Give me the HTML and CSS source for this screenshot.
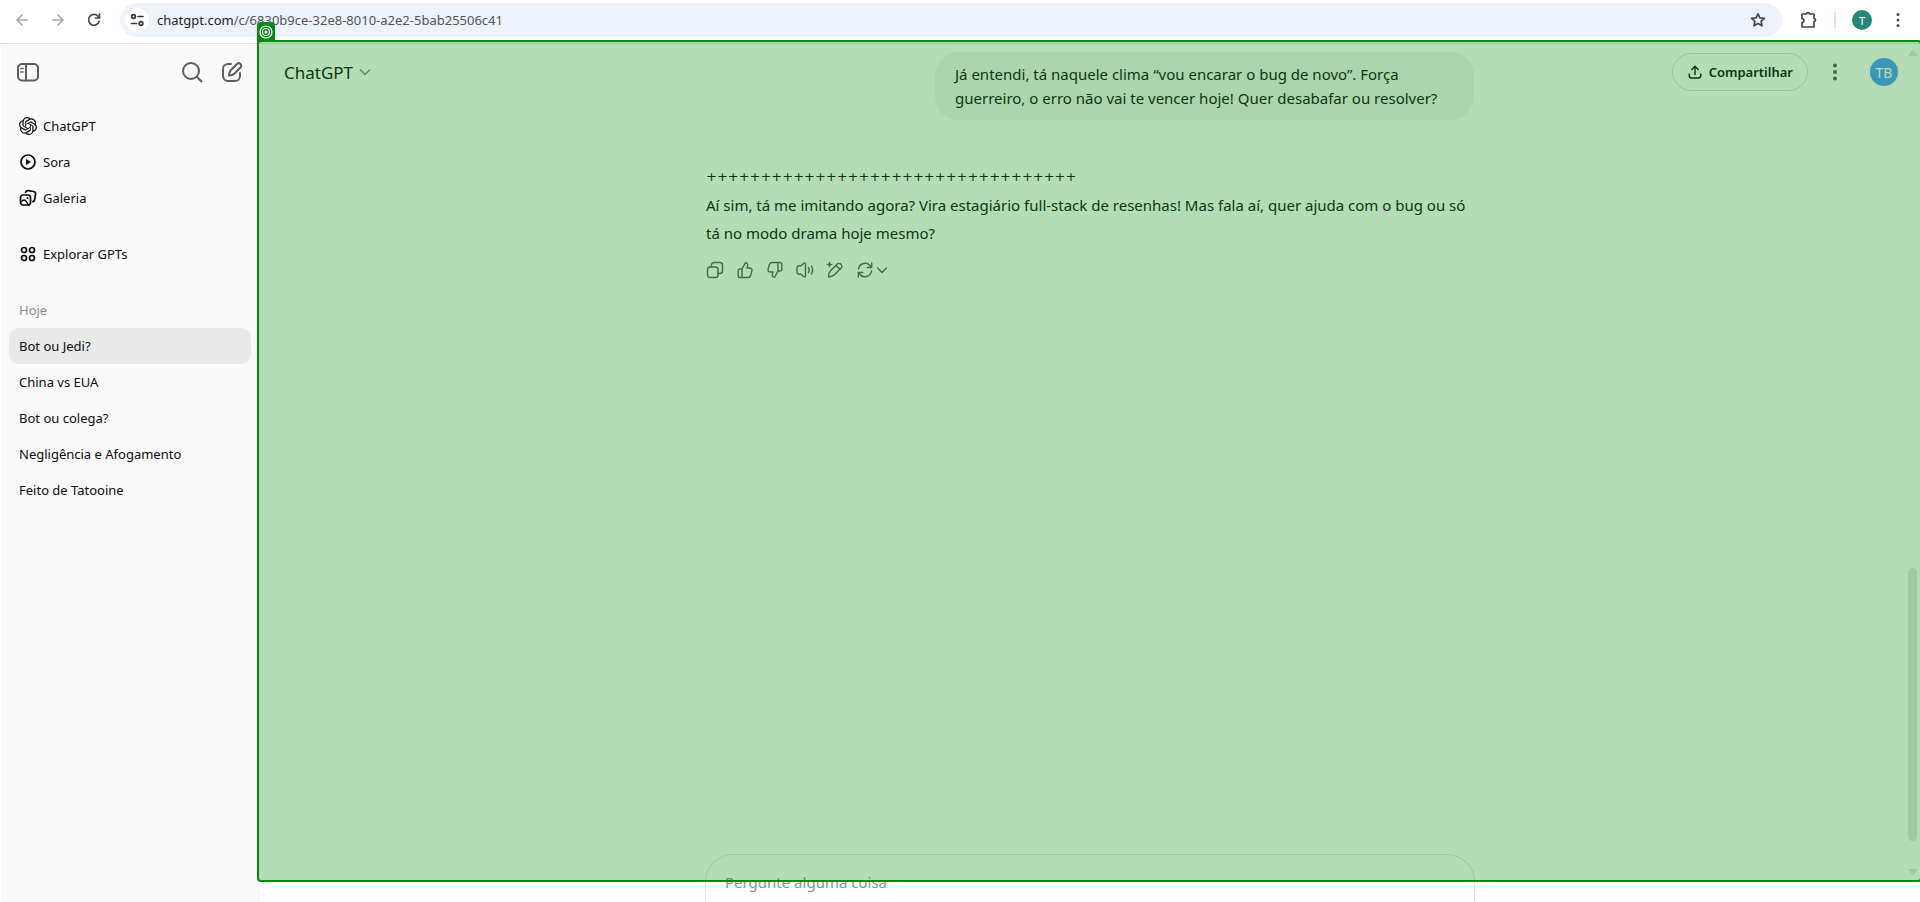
FILE: index.html
```html
<!DOCTYPE html>
<html lang="pt-BR">
<head>
<meta charset="utf-8">
<title>Bot ou Jedi?</title>
<link rel="stylesheet" href="styles.css">
</head>
<body>
<header class="browser">
  <nav class="browser-nav">
    <button class="tool muted" aria-label="Voltar"><svg class="i16" viewBox="0 0 16 16"><path class="bold" d="M13.500 8H3M8 3 3 8l5 5"/></svg></button>
    <button class="tool muted" aria-label="Avançar"><svg class="i16" viewBox="0 0 16 16"><path class="bold" d="M2.500 8H13M8 3l5 5-5 5"/></svg></button>
    <button class="tool" aria-label="Recarregar"><svg class="i16" viewBox="0 0 16 16"><path class="bold" d="M13.2 9.3A5.4 5.4 0 1 1 12 4.2l1.3 1.5M13.5 2v4h-4"/></svg></button>
  </nav>
  <div class="address">
    <button class="site-info" aria-label="Informações do site"><svg class="i16" viewBox="0 0 16 16"><circle class="bold" cx="4.500" cy="4.500" r="1.800"/><path class="bold" d="M9 4.500h5M2.500 11.500h5"/><circle class="bold" cx="12" cy="11.500" r="1.800"/></svg></button>
    <span class="url"><b>chatgpt.com</b>/c/6830b9ce-32e8-8010-a2e2-5bab25506c41</span>
    <button class="tool star" aria-label="Favoritar"><svg class="i16" viewBox="0 0 16 16"><path class="bold" d="m8 1.800 1.900 4.100 4.500.5-3.300 3 .9 4.400L8 11.600l-4 2.200.9-4.400-3.300-3 4.500-.5z"/></svg></button>
  </div>
  <button class="tool" aria-label="Extensões"><svg class="i18" viewBox="0 0 18 18"><path class="bold" d="M2 3h4.500a1.500 1.500 0 0 1 3 0H14v4.500a1.500 1.500 0 0 1 0 3V16H2v-4.500c2.500 0 2.500-4 0-4z"/></svg></button>
  <span class="divider"></span>
  <button class="profile" aria-label="Perfil">T</button>
  <button class="tool menu" aria-label="Menu do navegador"><svg class="i16 solid" viewBox="0 0 16 16"><circle cx="8" cy="2.500" r="1.500"/><circle cx="8" cy="8" r="1.500"/><circle cx="8" cy="13.500" r="1.500"/></svg></button>
</header>

<div class="app">
  <aside class="sidebar">
    <div class="side-top">
      <button class="tool" aria-label="Fechar barra lateral"><svg class="i24" viewBox="0 0 24 24"><rect class="heavy" x="2" y="4" width="20" height="16.500" rx="4"/><path class="heavy" d="M10 4v16.500"/><path class="bold" d="M5 8.500h2M5 12h2"/></svg></button>
      <span class="side-tools">
        <button class="tool" aria-label="Buscar"><svg class="i24" viewBox="0 0 24 24"><circle class="heavy" cx="11" cy="11" r="8"/><path class="heavy" d="m17 17 4.500 4.500"/></svg></button>
        <button class="tool" aria-label="Novo chat"><svg class="i24" viewBox="0 0 24 24"><path class="heavy" d="M11 4H8a5 5 0 0 0-5 5v7a5 5 0 0 0 5 5h7a5 5 0 0 0 5-5v-3"/><path class="heavy" d="M9 15.500c0-3 .5-4 2-5.500l6-6a2.400 2.400 0 0 1 3.500 3.500l-6 6c-1.500 1.500-2.500 2-5.500 2z"/></svg></button>
      </span>
    </div>
    <nav class="links">
      <a href="#"><svg class="i18 solid" viewBox="0 0 24 24"><path d="M22.2819 9.8211a5.9847 5.9847 0 0 0-.5157-4.9108 6.0462 6.0462 0 0 0-6.5098-2.9A6.0651 6.0651 0 0 0 4.9807 4.1818a5.9847 5.9847 0 0 0-3.9977 2.9 6.0462 6.0462 0 0 0 .7427 7.0966 5.98 5.98 0 0 0 .511 4.9107 6.051 6.051 0 0 0 6.5146 2.9001A5.9847 5.9847 0 0 0 13.2599 24a6.0557 6.0557 0 0 0 5.7718-4.2058 5.9894 5.9894 0 0 0 3.9977-2.9001 6.0557 6.0557 0 0 0-.7475-7.0729zm-9.022 12.6081a4.4755 4.4755 0 0 1-2.8764-1.0408l.1419-.0804 4.7783-2.7582a.7948.7948 0 0 0 .3927-.6813v-6.7369l2.02 1.1686a.071.071 0 0 1 .038.052v5.5826a4.504 4.504 0 0 1-4.4945 4.4944zm-9.6607-4.1254a4.4708 4.4708 0 0 1-.5346-3.0137l.142.0852 4.783 2.7582a.7712.7712 0 0 0 .7806 0l5.8428-3.3685v2.3324a.0804.0804 0 0 1-.0332.0615L9.74 19.9502a4.4992 4.4992 0 0 1-6.1408-1.6464zM2.3408 7.8956a4.485 4.485 0 0 1 2.3655-1.9728V11.6a.7664.7664 0 0 0 .3879.6765l5.8144 3.3543-2.0201 1.1685a.0757.0757 0 0 1-.071 0l-4.8303-2.7865A4.504 4.504 0 0 1 2.3408 7.872zm16.5963 3.8558L13.1038 8.364 15.1192 7.2a.0757.0757 0 0 1 .071 0l4.8303 2.7913a4.4944 4.4944 0 0 1-.6765 8.1042v-5.6772a.79.79 0 0 0-.407-.667zm2.0107-3.0231l-.142-.0852-4.7735-2.7818a.7759.7759 0 0 0-.7854 0L9.409 9.2297V6.8974a.0662.0662 0 0 1 .0284-.0615l4.8303-2.7866a4.4992 4.4992 0 0 1 6.6802 4.66zM8.3065 12.863l-2.02-1.1638a.0804.0804 0 0 1-.038-.0567V6.0742a4.4992 4.4992 0 0 1 7.3757-3.4537l-.142.0805L8.704 5.459a.7948.7948 0 0 0-.3927.6813zm1.0976-2.3654l2.602-1.4998 2.6069 1.4998v2.9994l-2.5974 1.4997-2.6067-1.4997Z"/></svg>ChatGPT</a>
      <a href="#"><svg class="i18" viewBox="0 0 18 18"><circle class="bold" cx="9" cy="9" r="7"/><path class="fill" d="m7 6 5 3-5 3z"/></svg>Sora</a>
      <a href="#"><svg class="i18" viewBox="0 0 18 18"><rect class="bold" x="1.500" y="6" width="10" height="10" rx="2.500"/><path class="bold" d="M6.500 3.500C7 1.700 8 1.500 9.500 1.700l5 .8c1.800.3 2.300 1.300 2 3l-.8 5c-.2 1.300-.8 2-2 2.200"/><path d="M2 13c3-3.500 5-2 7 2.500"/><circle class="fill" cx="8.500" cy="9" r="1"/></svg>Galeria</a>
      <a class="explore" href="#"><svg class="i18" viewBox="0 0 18 18"><circle class="bold" cx="5" cy="5" r="2.500"/><circle class="bold" cx="13" cy="5" r="2.500"/><circle class="bold" cx="5" cy="13" r="2.500"/><circle class="bold" cx="13" cy="13" r="2.500"/></svg>Explorar GPTs</a>
    </nav>
    <h2 class="group">Hoje</h2>
    <nav class="links">
      <a class="active" href="#">Bot ou Jedi?</a>
      <a href="#">China vs EUA</a>
      <a href="#">Bot ou colega?</a>
      <a href="#">Negligência e Afogamento</a>
      <a href="#">Feito de Tatooine</a>
    </nav>
  </aside>

  <main class="chat">
    <div class="topbar">
      <button class="model">ChatGPT<svg class="i16" viewBox="0 0 16 16"><path class="bold" d="m3.500 6 4.500 4.500L12.500 6"/></svg></button>
      <div class="top-actions">
        <button class="share"><svg class="i16" viewBox="0 0 16 16"><path d="M8 10.500V2.500M4.800 5.500 8 2.300l3.200 3.200M2.200 10v1.500c0 1.700.8 2.500 2.500 2.500h6.600c1.700 0 2.500-.8 2.500-2.500V10"/></svg>Compartilhar</button>
        <button class="tool" aria-label="Mais opções"><svg class="i18 solid" viewBox="0 0 18 18"><circle cx="9" cy="2.500" r="2"/><circle cx="9" cy="9" r="2"/><circle cx="9" cy="15.500" r="2"/></svg></button>
        <button class="avatar" aria-label="Conta">TB</button>
      </div>
    </div>
    <div class="thread">
      <p class="bubble">Já entendi, tá naquele clima “vou encarar o bug de novo”. Força guerreiro, o erro não vai te vencer hoje! Quer desabafar ou resolver?</p>
      <div class="answer">
        <p class="pluses">++++++++++++++++++++++++++++++++++</p>
        <p>Aí sim, tá me imitando agora? Vira estagiário full-stack de resenhas! Mas fala aí, quer ajuda com o bug ou só tá no modo drama hoje mesmo?</p>
      </div>
      <div class="actions">
        <button class="tool" aria-label="Copiar"><svg class="i18" viewBox="0 0 18 18"><rect x="1.500" y="6" width="10.500" height="10.500" rx="2.500"/><path d="M5.500 6V4A2.500 2.500 0 0 1 8 1.500h6A2.500 2.500 0 0 1 16.500 4v6a2.500 2.500 0 0 1-2.500 2.500h-2"/></svg></button>
        <button class="tool" aria-label="Boa resposta"><svg class="i18" viewBox="0 0 18 18"><path d="M6 8 9.300 1.800c2 0 2.700 1.200 2.300 2.800L11 7h2.800c1.700 0 2.500 1.200 2.100 2.800l-1.200 4.500c-.4 1.500-1.200 2.200-2.700 2.200H4A1.800 1.800 0 0 1 2.200 14.700v-5A1.700 1.700 0 0 1 4 8h2v8.500"/></svg></button>
        <button class="tool" aria-label="Resposta ruim"><svg class="i18" viewBox="0 0 18 18"><path d="m12 10-3.300 6.200c-2 0-2.700-1.200-2.300-2.800L7 11H4.200c-1.700 0-2.500-1.200-2.100-2.800l1.200-4.500C3.700 2.200 4.500 1.500 6 1.500h8a1.800 1.800 0 0 1 1.800 1.800v5A1.700 1.700 0 0 1 14 10h-2V1.500"/></svg></button>
        <button class="tool" aria-label="Ler em voz alta"><svg class="i18" viewBox="0 0 18 18"><path d="M9.500 3.200v11.600c0 1.400-1 1.700-2 .8L5 13.200H3A2 2 0 0 1 1 11.200V6.800a2 2 0 0 1 2-2h2l2.500-2.400c1-.9 2-.6 2 .8zM12.500 6.500q1.200 2.500 0 5M15.500 5q2.200 4 0 8"/></svg></button>
        <button class="tool" aria-label="Editar no canvas"><svg class="i18" viewBox="0 0 18 18"><path d="M2.500 16c0-3.500.3-4.500 2-6.200l6.300-6.300a2.500 2.500 0 0 1 4.200 0 2.500 2.500 0 0 1 0 3.800l-6.300 6.300c-1.700 1.700-2.700 2.200-6.200 2.400zM10 4.500l4 4"/><path class="fill" d="m3.500 0 1 2.500L7 3.500l-2.500 1-1 2.500-1-2.500L0 3.500l2.500-1z"/></svg></button>
        <button class="tool retry" aria-label="Tentar novamente"><svg class="i18" viewBox="0 0 18 18"><path d="M2.500 8a6.700 6.700 0 0 1 12-3l1 1.500M15.700 2v4.500h-4.500M15.500 10a6.700 6.700 0 0 1-12 3l-1-1.500M2.300 16v-4.500h4.500"/></svg><svg class="i16" viewBox="0 0 16 16"><path d="m3.500 6 4.500 4.500L12.500 6"/></svg></button>
      </div>
      <input class="composer" type="text" placeholder="Pergunte alguma coisa" aria-label="Pergunte alguma coisa">
    </div>
    <div class="scrollbar"><span class="arrow up"></span><span class="thumb"></span><span class="arrow down"></span></div>
  </main>
</div>

<div class="highlight">
  <span class="tag"><svg class="i14" viewBox="0 0 14 14"><circle cx="7" cy="7" r="6"/><circle cx="7" cy="7" r="3.500"/><circle cx="7" cy="7" r="1"/></svg></span>
</div>
</body>
</html>
```
FILE: styles.css
```css
* { box-sizing: border-box; }
body {
  margin: 0;
  height: 100vh;
  display: flex;
  flex-direction: column;
  position: relative;
  overflow: hidden;
  background: #fff;
  color: #0d0d0d;
  font-family: "Noto Sans", "Open Sans", sans-serif;
  font-size: 13px;
}
button {
  border: 0;
  padding: 0;
  background: none;
  color: inherit;
  font: inherit;
}
svg {
  display: block;
  flex: none;
  fill: none;
  stroke: currentColor;
  stroke-width: 1.4;
  stroke-linejoin: round;
  stroke-linecap: round;
}
.bold { stroke-width: 1.7; }
.heavy { stroke-width: 2; }
.solid, .fill { fill: currentColor; stroke: none; }
.i14 { width: 14px; height: 14px; stroke-width: 1.2; }
.i16 { width: 16px; height: 16px; }
.i18 { width: 18px; height: 18px; }
.i24 { width: 24px; height: 24px; }
.tool { display: flex; align-items: center; color: #474747; }
.muted { color: #a8a8a8; }

/* Browser bar */
.browser {
  display: flex;
  align-items: center;
  height: 44px;
  padding: 0 14px;
  padding-bottom: 3px;
  border-bottom: 1px solid #dfe1e0;
}
.browser-nav { display: flex; gap: 20px; margin-right: 18px; }
.browser > .tool { margin-left: 18px; }
.address {
  flex: 1;
  display: flex;
  align-items: center;
  height: 34px;
  padding: 0 16px 0 5px;
  border-radius: 17px;
  background: #edf1fa;
}
.site-info {
  display: grid;
  place-items: center;
  width: 24px;
  height: 24px;
  margin-right: 8px;
  border-radius: 50%;
  background: #fff;
  color: #333;
}
.url { flex: 1; font-size: 13px; color: #555; }
.url b { font-weight: 400; color: #1f1f1f; }
.divider { width: 2px; height: 16px; margin: 0 16px; background: #d3e3fd; }
.profile {
  width: 20px;
  height: 20px;
  border-radius: 50%;
  background: #27887a;
  color: #fff;
  font-size: 11px;
}

/* Sidebar */
.app { flex: 1; display: flex; min-height: 0; }
.sidebar {
  flex: none;
  width: 259px;
  margin-left: 1px;
  padding: 10px 8px;
  background: #f9f9f9;
}
.side-top {
  display: flex;
  align-items: center;
  justify-content: space-between;
  height: 36px;
  margin-bottom: 18px;
  padding: 0 8px 0 7px;
}
.side-top .tool { color: #5d5d5d; }
.side-tools { display: flex; gap: 16px; }
.links { display: flex; flex-direction: column; }
.links a {
  display: flex;
  align-items: center;
  gap: 6px;
  height: 36px;
  margin-right: 1px;
  padding: 0 10px;
  border-radius: 10px;
  color: #0d0d0d;
  text-decoration: none;
}
.links .explore { margin-top: 20px; }
.links .active { background: #e9e9e9; }
.group {
  margin: 20px 0 0;
  padding: 0 10px;
  font-size: 13px;
  font-weight: 400;
  line-height: 36px;
  color: #8f8f8f;
}

/* Conversation */
.chat {
  flex: 1;
  display: grid;
  grid-template-rows: 1fr;
  grid-template-columns: 1fr;
  position: relative;
  min-width: 0;
}
.topbar {
  grid-area: 1 / 1;
  align-self: start;
  display: flex;
  align-items: center;
  justify-content: space-between;
  height: 56px;
  padding: 0 22px 0 24px;
}
.model { display: flex; align-items: center; gap: 4px; font-size: 17px; }
.model svg { color: #8f8f8f; }
.top-actions { display: flex; align-items: center; gap: 18px; }
.top-actions .tool { color: #5d5d5d; }
.share {
  display: flex;
  align-items: center;
  gap: 6px;
  height: 38px;
  padding: 0 14px;
  border: 1px solid #d9d9d9;
  border-radius: 19px;
  font-size: 13px;
  font-weight: 600;
}
.avatar {
  width: 28px;
  height: 28px;
  margin-left: 8px;
  border-radius: 50%;
  background: #549aff;
  color: #fff;
  font-size: 14px;
}
.thread {
  grid-area: 1 / 1;
  justify-self: center;
  display: flex;
  flex-direction: column;
  width: 100%;
  max-width: 770px;
  padding-top: 8px;
}
.bubble {
  align-self: flex-end;
  max-width: 70%;
  margin: 0 1px;
  padding: 10px 20px;
  border-radius: 24px;
  background: #f4f4f4;
  font-size: 15px;
  line-height: 24px;
}
.answer {
  margin: 43px 1px 0;
  font-size: 15px;
  line-height: 28px;
}
.answer p { margin: 0; }
.answer .pluses { font-family: "DejaVu Sans", sans-serif; font-size: 13px; }
.actions { display: flex; gap: 12px; margin: 14px 1px 0; }
.actions .tool { color: #5d5d5d; }
.composer {
  height: 48px;
  margin-top: auto;
  padding: 6px 19px 0;
  border: 1px solid #e3e3e3;
  border-bottom: 0;
  border-radius: 28px 28px 0 0;
  background: #fff;
  font: inherit;
  font-size: 15px;
}
.composer::placeholder { color: #8f8f8f; opacity: 1; }
.scrollbar {
  position: absolute;
  top: 4px;
  right: 3px;
  bottom: 26px;
  width: 9px;
  display: flex;
  flex-direction: column;
  align-items: center;
}
.thumb { width: 9px; height: 33%; margin: auto 0 28px; border-radius: 5px; background: #e4e4e4; }
.arrow { border: 5px solid transparent; }
.up { border-bottom: 7px solid #e4e4e4; border-top: 0; margin-top: 1px; }
.down { border-top: 7px solid #e4e4e4; border-bottom: 0; }

/* Element picker frame */
.highlight {
  position: absolute;
  top: 40px;
  right: -2px;
  bottom: 20px;
  left: 257px;
  border: 2px solid #048b11;
  border-radius: 4px;
  background: rgba(6, 143, 14, 0.3);
}
.tag {
  position: absolute;
  left: -2px;
  bottom: 100%;
  display: grid;
  place-items: center;
  width: 18px;
  height: 20px;
  border-radius: 4px 4px 0 0;
  background: #048b11;
  color: #fff;
}
```
